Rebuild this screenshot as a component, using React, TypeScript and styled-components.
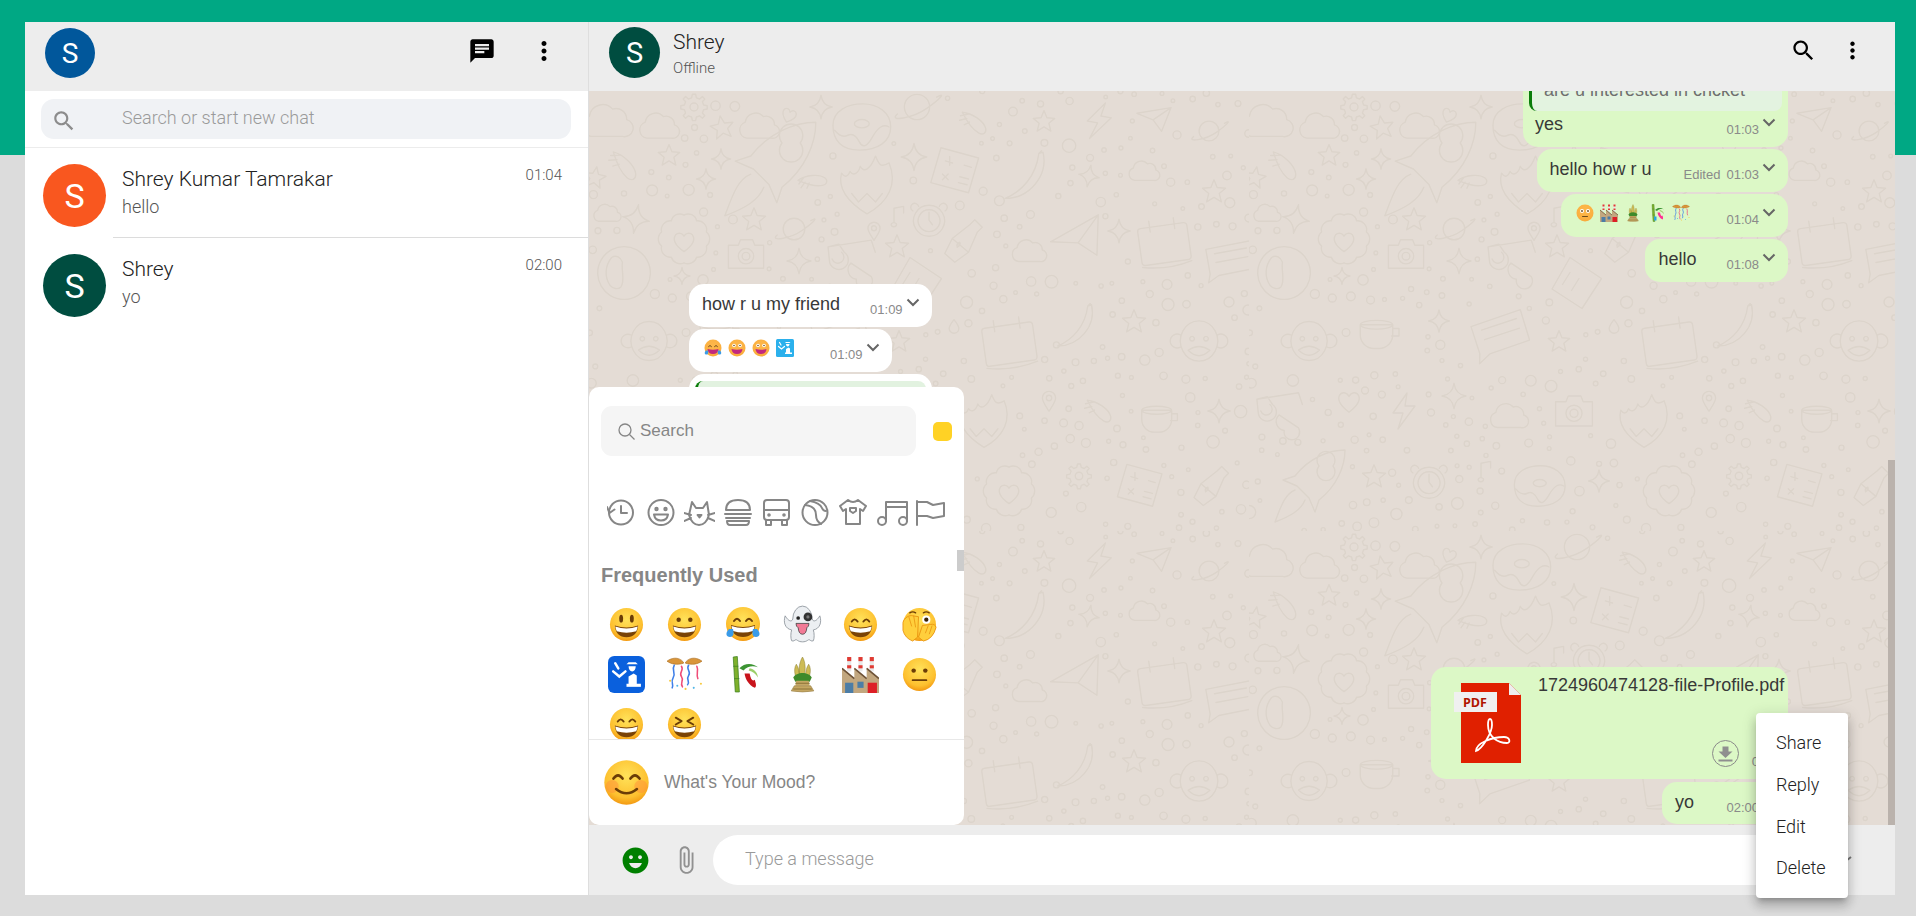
import React from 'react'
import styled, { createGlobalStyle } from 'styled-components'

const Global = createGlobalStyle`
  html, body { margin: 0; height: 100%; }
  body {
    background: linear-gradient(#00a884 155px, #dcdcdc 155px);
    font-family: Roboto, "Liberation Sans", sans-serif;
    overflow: hidden;
  }
`

const ICONS = {
  chat: 'M20 2H4c-1.1 0-1.99.9-1.99 2L2 22l4-4h14c1.1 0 2-.9 2-2V4c0-1.1-.9-2-2-2zM6 9h12v2H6V9zm8 5H6v-2h8v2zm4-6H6V6h12v2z',
  dots: 'M12 8c1.1 0 2-.9 2-2s-.9-2-2-2-2 .9-2 2 .9 2 2 2zm0 2c-1.1 0-2 .9-2 2s.9 2 2 2 2-.9 2-2-.9-2-2-2zm0 6c-1.1 0-2 .9-2 2s.9 2 2 2 2-.9 2-2-.9-2-2-2z',
  search: 'M15.5 14h-.79l-.28-.27C15.41 12.59 16 11.11 16 9.5 16 5.91 13.09 3 9.5 3S3 5.91 3 9.5 5.91 16 9.5 16c1.61 0 3.09-.59 4.23-1.57l.27.28v.79l5 4.99L20.49 19l-4.99-5zm-6 0C7.01 14 5 11.99 5 9.5S7.01 5 9.5 5 14 7.01 14 9.5 11.99 14 9.5 14z',
  emoji: 'M11.99 2C6.47 2 2 6.48 2 12s4.47 10 9.99 10C17.52 22 22 17.52 22 12S17.52 2 11.99 2zM8.5 8C9.33 8 10 8.67 10 9.5S9.33 11 8.5 11 7 10.33 7 9.5 7.67 8 8.5 8zM12 18c-2.28 0-4.22-1.66-5-4h10c-.78 2.34-2.72 4-5 4zm3.5-7c-.83 0-1.5-.67-1.5-1.5S14.67 8 15.5 8s1.5.67 1.5 1.5-.67 1.5-1.5 1.5z',
  clip: 'M16.5 6v11.5c0 2.21-1.79 4-4 4s-4-1.79-4-4V5c0-1.38 1.12-2.5 2.5-2.5s2.5 1.12 2.5 2.5v10.5c0 .55-.45 1-1 1s-1-.45-1-1V6H10v9.5c0 1.38 1.12 2.5 2.5 2.5s2.5-1.12 2.5-2.5V5c0-2.21-1.79-4-4-4S7 2.79 7 5v12.5c0 3.04 2.46 5.5 5.5 5.5s5.5-2.46 5.5-5.5V6h-1.5z'
}

const Icon = ({ d, size, color = '#000' }: { d: string, size: number, color?: string }) => (
  <svg width={size} height={size} viewBox='0 0 24 24' fill={color} style={{ display: 'block', flexShrink: 0 }}>
    <path d={d} />
  </svg>
)

/* wallpaper doodles, each drawn in an 80x80 box */
const DOODLES: Record<string, string> = {
  star5: 'M40 8 L49 30 L73 32 L55 47 L61 71 L40 58 L19 71 L25 47 L7 32 L31 30Z',
  star4: 'M40 6 Q44 36 72 40 Q44 44 40 74 Q36 44 8 40 Q36 36 40 6Z',
  cloud: 'M18 62a15 15 0 0 1-3-29a19 19 0 0 1 33-10a15 15 0 0 1 20 15a12 12 0 0 1-6 24Z',
  bolt: 'M46 4 L18 44 H38 L28 76 L62 30 H42Z',
  plane: 'M4 28 L76 16 L56 66 L38 42Z M38 42 L76 16',
  planet: 'M22 40a18 18 0 1 0 36 0a18 18 0 1 0-36 0 M12 50C-2 62 34 56 54 42S82 18 68 26',
  calendar: 'M12 20h56a4 4 0 0 1 4 4v40a4 4 0 0 1-4 4H12a4 4 0 0 1-4-4V24a4 4 0 0 1 4-4Z M24 12v14 M56 12v14 M8 70q32 8 64 0',
  banana: 'M60 6C68 40 40 72 6 72C30 62 50 40 54 8Z M54 8l4-4',
  chat: 'M8 24L70 12L76 50L26 60L12 70L14 58Z M20 30L64 22 M22 42L66 34',
  monkey: 'M40 14a24 26 0 1 0 0.1 0Z M16 32a9 9 0 1 0 0 16 M64 32a9 9 0 1 1 0 16 M31 34a3 3 0 1 0 .1 0Z M49 34a3 3 0 1 0 .1 0Z M26 52q14-10 28 0q-14 14-28 0Z',
  cup: 'M10 30H62V46A22 22 0 0 1 40 68H32A22 22 0 0 1 10 46Z M10 30A26 7 0 0 1 62 30A26 7 0 0 1 10 30 M62 36H72V48H60',
  heart: 'M40 70C14 50 10 36 14 26C20 14 34 16 40 28C46 16 60 14 66 26C70 36 66 50 40 70Z',
  pin: 'M40 74C26 52 18 42 18 30A22 22 0 0 1 62 30C62 42 54 52 40 74Z M31 30a9 9 0 1 0 18 0a9 9 0 1 0-18 0',
  glasses: 'M6 22L22 18L30 30A14 14 0 1 1 8 42Z M40 46L70 66A12 12 0 1 1 48 70A14 14 0 0 1 40 46Z M12 40a9 9 0 1 0 14-10 M6 22L70 12L76 30',
  camera: 'M8 24H26L30 14H52L56 24H72V66H8Z M26 44a14 14 0 1 0 28 0a14 14 0 1 0-28 0 M33 44a7 7 0 1 0 14 0a7 7 0 1 0-14 0',
  note: 'M30 62V14L62 8V30 M30 62a9 7 0 1 1-1 0Z',
  rocket: 'M76 4C60 4 40 12 26 30L14 34L28 40L40 52L46 66L50 54C68 40 76 20 76 4Z M50 20a9 9 0 1 0 14 0a9 9 0 1 0-14 0 M26 44C16 48 12 60 6 76C22 70 32 64 36 54',
  donut: 'M6 38C6 20 24 12 42 12S76 22 76 40S60 68 38 68S6 56 6 38Z M32 36a9 5 0 1 0 18 0a9 5 0 1 0-18 0 M8 44q8 10 16 6t14 8t16-6t20-12',
  flame: 'M40 74C14 58 6 42 10 26C14 32 18 30 20 24C24 30 30 26 32 18C36 26 44 22 50 6C54 16 56 20 66 14C76 38 66 60 40 74Z M22 50l8 10l10-10l10 10l8-10',
  clock: 'M40 16a27 27 0 1 0 .1 0Z M40 24a19 19 0 1 0 .1 0Z M40 28V42L46 50 M22 18a7 7 0 1 0-10 8 M58 18a7 7 0 1 1 10 8',
  bottle: 'M62 6L74 18L66 26L52 58L30 74L14 60L26 36L54 14Z M26 36L52 58 M34 50q6-4 4-8q-6 2-4 8Z',
  comet: 'M14 16C36 18 62 36 66 52C68 62 60 68 50 62C36 54 24 36 14 16Z M10 24l18-4 M8 34l16-4 M18 44l12-6',
  cloudHeart: 'M40 6a12 12 0 0 1 18 8a13 13 0 0 1 14 16a13 13 0 0 1 0 20a13 13 0 0 1-14 16a13 13 0 0 1-18 8a13 13 0 0 1-18-8a13 13 0 0 1-14-16a13 13 0 0 1 0-20a13 13 0 0 1 14-16a12 12 0 0 1 18-8Z M40 58C26 48 24 40 28 34C32 30 38 32 40 36C42 32 48 30 52 34C56 40 54 48 40 58Z',
  gear: 'M36 8h8l2 9l8 3l7-6l6 6l-6 7l3 8l9 2v8l-9 2l-3 8l6 7l-6 6l-7-6l-8 3l-2 9h-8l-2-9l-8-3l-7 6l-6-6l6-7l-3-8l-9-2v-8l9-2l3-8l-6-7l6-6l7 6l8-3Z M30 40a10 10 0 1 0 20 0a10 10 0 1 0-20 0',
  ball: 'M40 6a34 34 0 1 0 .1 0Z M24 20C16 30 14 44 22 56C26 60 32 62 36 58C42 50 36 36 38 26C36 20 30 16 24 20Z',
  drop: 'M40 8C40 8 64 38 64 52A24 24 0 0 1 16 52C16 38 40 8 40 8Z',
  calc: 'M22 8L74 22L60 70L8 56Z M28 26l10 3 M34 20v12 M54 32l10 3 M24 44l8 8 M32 44l-8 8 M48 48l12 3 M46 56l12 3',
  case: 'M28 6L70 34L44 74L4 48Z M28 26L18 42 M40 34L30 50'
}

const PLACED: [string, number, number, number, number][] = [
  ['cloud', 18, 30, 56, 0], ['cloud', 70, 35, 44, 0], ['gear', 105, 16, 32, 0], ['star5', 133, 36, 28, -10], ['cloud', 170, 35, 44, 0],
  ['heart', 200, 24, 20, 20], ['star4', 232, 16, 28, 0], ['donut', 272, 36, 66, 0], ['planet', 328, 16, 56, 0], ['comet', 385, 32, 36, 0],
  ['comet', 35, 75, 40, 10], ['star5', 80, 64, 26, 0], ['star4', 132, 68, 24, 0], ['rocket', 180, 78, 104, 0], ['comet', 224, 90, 34, -40],
  ['flame', 278, 94, 68, 0], ['star4', 325, 66, 32, 0], ['calc', 365, 80, 58, 0], ['star5', 6, 86, 26, 10], ['star4', 117, 88, 24, 0],
  ['cloud', 18, 122, 30, 0], ['star4', 47, 128, 34, 10], ['pin', 285, 140, 22, 0], ['note', 308, 125, 24, 0], ['clock', 340, 128, 46, 0],
  ['bottle', 372, 150, 50, 0], ['cloudHeart', 95, 148, 56, 0], ['star5', 165, 128, 28, 0], ['planet', 205, 138, 48, 0], ['camera', 157, 163, 44, 0],
  ['star4', 210, 170, 30, 0], ['glasses', 262, 168, 54, 0], ['star5', 308, 155, 28, 0], ['ball', 35, 182, 62, 0], ['star4', 93, 185, 20, 0],
  ['case', 330, 192, 60, 0],
  ['star5', 455, 30, 26, 0], ['bolt', 510, 30, 42, 10], ['plane', 565, 28, 38, 0], ['banana', 440, 85, 56, 0], ['star4', 500, 85, 26, 10],
  ['cloud', 555, 80, 34, 0], ['planet', 620, 40, 44, 0], ['star5', 625, 100, 28, 0], ['cloud', 440, 160, 38, 0], ['plane', 490, 150, 60, -20],
  ['calendar', 575, 150, 62, -8], ['chat', 640, 170, 58, 0], ['star4', 530, 140, 28, 0],
  ['monkey', 60, 250, 60, 0], ['cup', 130, 240, 50, 0], ['star4', 190, 230, 26, 0], ['chat', 250, 245, 66, -8], ['star5', 310, 250, 26, 0],
  ['drop', 365, 235, 16, 0], ['calendar', 420, 250, 64, -8], ['banana', 490, 235, 50, 0], ['star5', 545, 230, 28, 0], ['monkey', 610, 250, 62, 0],
  ['glasses', 30, 320, 52, 0], ['heart', 100, 310, 30, 0], ['bolt', 155, 320, 40, 0], ['star4', 205, 305, 30, 0], ['cloud', 260, 325, 42, 0],
  ['camera', 325, 320, 46, 0], ['flame', 395, 330, 62, 0], ['pin', 460, 310, 24, 0], ['comet', 510, 320, 36, 0], ['cup', 570, 325, 46, 0],
  ['star4', 630, 320, 28, 0], ['rocket', 60, 395, 80, 0], ['star5', 125, 385, 28, 0], ['clock', 180, 390, 46, 0], ['note', 235, 380, 24, 0],
  ['donut', 290, 395, 58, 0], ['star4', 350, 390, 26, 0], ['cloudHeart', 420, 400, 56, 0], ['gear', 490, 385, 30, 0], ['calc', 550, 395, 54, 0],
  ['bottle', 620, 395, 46, 0]
]

let seed = 23
const rand = () => {
  seed = (seed * 16807) % 2147483647
  return seed / 2147483647
}
const TILE_W = 660
const TILE_H = 440
const specks: { x: number, y: number, r: number }[] = []
for (let i = 0; i < 2600 && specks.length < 330; i++) {
  const x = rand() * TILE_W
  const y = rand() * TILE_H
  const r = 1.8 + rand() * rand() * 5
  const hitsMotif = PLACED.some(m => Math.hypot(m[1] - x, m[2] - y) < m[3] * 0.52 + r)
  const hitsSpeck = specks.some(s => Math.hypot(s.x - x, s.y - y) < s.r + r + 7)
  if (!hitsMotif && !hitsSpeck) specks.push({ x, y, r })
}

const Wallpaper = () => (
  <S.Wallpaper width='100%' height='100%'>
    <defs>
      <pattern id='doodle' width={TILE_W} height={TILE_H} patternUnits='userSpaceOnUse'>
        <g fill='none' stroke='#dcd4cb' strokeWidth='1.4' strokeLinejoin='round' strokeLinecap='round'>
          {PLACED.map((m, i) => (
            <path
              key={i}
              d={DOODLES[m[0]]}
              vectorEffect='non-scaling-stroke'
              transform={`translate(${m[1] - m[3] / 2} ${m[2] - m[3] / 2}) scale(${m[3] / 80}) rotate(${m[4]} 40 40)`}
            />
          ))}
          {specks.map((c, i) => <circle key={i} cx={c.x} cy={c.y} r={c.r} />)}
        </g>
      </pattern>
    </defs>
    <rect width='100%' height='100%' fill='url(#doodle)' />
  </S.Wallpaper>
)

/* emoji, drawn since no colour emoji font is available */
type FaceKind = 'smiley' | 'grin' | 'joy' | 'beam' | 'neutral' | 'squint' | 'smile' | 'peek' | 'stare'

const Face = ({ kind, size, flat }: { kind: FaceKind, size: number, flat?: boolean }) => {
  const id = `f${flat ? 'flat' : 'shade'}`
  const ink = flat ? '#6b4a1a' : '#6b3d07'
  const arch = <path d='M9 15q3-4.5 6 0M21 15q3-4.5 6 0' fill='none' stroke={ink} strokeWidth='2' strokeLinecap='round' />
  const mouth = flat
    ? <path d='M7 20q11 3 22 0q-1 10-11 10t-11-10Z' fill='#c2297e' />
    : <>
        <path d='M6 19q12 4 24 0q-1 12-12 12t-12-12Z' fill='#7a4306' />
        <path d='M6.500 20q11.500 4 23 0q-.5 3-1.500 5q-10 3-20 0q-1-2-1.500-5Z' fill='#fff' />
      </>
  return (
    <svg width={size} height={size} viewBox='0 0 36 36' style={{ display: 'block', flexShrink: 0 }}>
      <defs>
        <radialGradient id={id} cx='50%' cy='35%' r='65%'>
          <stop offset='0' stopColor={flat ? '#fdb84c' : '#ffe25a'} />
          <stop offset='0.75' stopColor={flat ? '#fbb040' : '#fdc02f'} />
          <stop offset='1' stopColor={flat ? '#f8a93a' : '#f39a12'} />
        </radialGradient>
      </defs>
      <circle cx='18' cy='18' r='17' fill={`url(#${id})`} />
      {kind === 'smiley' && <>
        <ellipse cx='12.500' cy='12' rx='2' ry='4' fill={ink} /><ellipse cx='23.500' cy='12' rx='2' ry='4' fill={ink} />{mouth}
      </>}
      {kind === 'grin' && <>
        {flat
          ? <><circle cx='12' cy='13' r='3.600' fill='#fff' /><circle cx='24' cy='13' r='3.600' fill='#fff' /><circle cx='12' cy='13' r='1.600' fill={ink} /><circle cx='24' cy='13' r='1.600' fill={ink} /></>
          : <><circle cx='12' cy='13' r='2.300' fill={ink} /><circle cx='24' cy='13' r='2.300' fill={ink} /></>}
        {mouth}
      </>}
      {kind === 'joy' && <>
        {arch}{mouth}
        <path d='M4 23c-4 4-3 8 1 8s4-4 3-8ZM32 23c4 4 3 8-1 8s-4-4-3-8Z' fill='#3a9be8' />
      </>}
      {kind === 'beam' && <>{arch}{mouth}</>}
      {kind === 'neutral' && <>
        <circle cx='12' cy='14' r='2.300' fill={ink} /><circle cx='24' cy='14' r='2.300' fill={ink} />
        <rect x='10' y='23' width='16' height='1.800' rx='.9' fill={ink} />
      </>}
      {kind === 'stare' && <>
        <circle cx='12' cy='14' r='4' fill='#fff' /><circle cx='24' cy='14' r='4' fill='#fff' />
        <circle cx='12' cy='14' r='1.800' fill={ink} /><circle cx='24' cy='14' r='1.800' fill={ink} />
        <rect x='12' y='24' width='12' height='2' rx='1' fill={ink} />
      </>}
      {kind === 'squint' && <>
        <path d='M9 11l6 3.500l-6 3.500M27 11l-6 3.500l6 3.500' fill='none' stroke={ink} strokeWidth='2' strokeLinecap='round' strokeLinejoin='round' />{mouth}
      </>}
      {kind === 'smile' && <>
        <circle cx='7' cy='21' r='5' fill='#ff8a3c' opacity='.45' /><circle cx='29' cy='21' r='5' fill='#ff8a3c' opacity='.45' />
        <path d='M8 15q3.500-5 7 0M21 15q3.500-5 7 0' fill='none' stroke={ink} strokeWidth='2' strokeLinecap='round' />
        <path d='M10 23q8 6.500 16 0' fill='none' stroke={ink} strokeWidth='2' strokeLinecap='round' />
      </>}
      {kind === 'peek' && <>
        <path d='M8 6q3-2 6 0M22 6q3-2 6 0' fill='none' stroke={ink} strokeWidth='1.400' strokeLinecap='round' />
        <circle cx='25' cy='13' r='4.200' fill='#fff' /><circle cx='25' cy='13' r='2.200' fill='#3a2208' />
        <path d='M1 16c1-5 7-8 10-7l6 1l-1 21l-5 4q-8-3-10-11ZM35 21c0-2-3-4-6-3l-8 1l-4 12l5 4q10-2 13-14Z' fill='#ffcf3c' stroke='#e8920e' strokeWidth='.9' />
        <path d='M7 10l3 10M12 9l2 12M27 19l-3 8M31 19l-3 9' stroke='#e8920e' strokeWidth='.8' />
      </>}
    </svg>
  )
}

const Ghost = ({ size }: { size: number }) => (
  <svg width={size} height={size} viewBox='0 0 36 36' style={{ display: 'block', flexShrink: 0 }}>
    <path d='M9 13a9 12 0 0 1 18 0c1 3 4 2 7-3c2 6 0 12-6 13c1 3 1 8 0 10c-2 1-3-1-4-1s-2 2-6 2s-5-2-6-2s-2 2-4 1c-1-2-1-7 0-10c-6-1-8-7-6-13c3 5 6 6 7 3Z' fill='#eceff2' stroke='#8f959c' strokeWidth='.8' />
    <circle cx='14' cy='12' r='1.700' fill='#222' />
    <circle cx='23' cy='11' r='4' fill='#333' /><circle cx='23' cy='11' r='1.500' fill='#777' />
    <path d='M12 17h12q0 3-2 4q-.5 6-4 6t-4-6q-2-1-2-4Z' fill='#f27a96' stroke='#3a3a3a' strokeWidth='.7' />
  </svg>
)

const Passport = ({ size, flat }: { size: number, flat?: boolean }) => (
  <svg width={size} height={size} viewBox='0 0 36 36' style={{ display: 'block', flexShrink: 0 }}>
    <rect x='0' y='0' width='36' height='36' rx={flat ? 3 : 6} fill={flat ? '#2bb0ec' : '#0a60dd'} />
    <g fill='#fff'>
      <path d='M20 6h7l2 2h-11ZM20 10h7c0 3-1.500 5-3.500 5s-3.500-2-3.500-5Z' />
      <path d='M20 28v-8l5-3l3 2v9Z' />
      <rect x='18' y='27' width='14' height='3' />
    </g>
    <path d='M7 7l3 5M5 15l6 5l6-5' fill='none' stroke='#fff' strokeWidth='2.400' strokeLinecap='round' />
  </svg>
)

const Confetti = ({ size }: { size: number }) => (
  <svg width={size} height={size} viewBox='0 0 36 36' style={{ display: 'block', flexShrink: 0 }}>
    <path d='M17 6C12 0 5 2 1 5c4 3 10 4 16 2ZM19 6c5-6 12-4 16-1c-4 3-10 4-16 2Z' fill='#d9953a' stroke='#a96a1c' strokeWidth='.6' />
    <g fill='none' strokeWidth='1.500' strokeLinecap='round'>
      <path d='M8 9c-3 5 2 7-1 12s1 6-1 10' stroke='#3f7fe8' />
      <path d='M15 10c3 4-3 6 0 10s-2 6 1 10' stroke='#ef4d78' />
      <path d='M22 9c-3 4 3 6 0 10s2 6-1 9' stroke='#3f7fe8' />
      <path d='M30 10c2 4-1 8 1 12' stroke='#ef4d78' />
    </g>
    <g fill='#f7c93c'><circle cx='4' cy='24' r='1' /><circle cx='19' cy='32' r='1' /><circle cx='34' cy='27' r='1' /></g>
    <g fill='#53b7e8'><circle cx='11' cy='29' r='1' /><circle cx='27' cy='31' r='1' /></g>
  </svg>
)

const Bamboo = ({ size, flat }: { size: number, flat?: boolean }) => (
  <svg width={size} height={size} viewBox='0 0 36 36' style={{ display: 'block', flexShrink: 0 }}>
    <g stroke='#3b7f1e' strokeWidth='.7'>
      <path d='M8 1l4-.5L14 35h-4Z' fill='#7fb02c' />
      <path d='M8 10h5M9 22h5' />
    </g>
    <path d='M14 12c5-6 14-5 18-1c-5-2-10-1-14 3Z' fill='#3c9433' />
    <path d='M24 12c5 1 8 5 8 9c-2-4-5-6-9-7Z' fill='#9ccf6a' />
    <path d='M19 17c1 6 4 11 10 14c2-2 1-4 0-8c-2 2-4 0-5-6Z' fill={flat ? '#ff2f92' : '#c8141c'} />
    {flat && <path d='M12 25h5v8h-5Z' fill='#29a9e0' />}
  </svg>
)

const Kadomatsu = ({ size }: { size: number }) => (
  <svg width={size} height={size} viewBox='0 0 36 36' style={{ display: 'block', flexShrink: 0 }}>
    <path d='M18 1c3 5 3 12 2 17h-5c-1-5 0-12 3-17ZM12 8c2 3 3 7 3 11h-4c-1-4-1-8 1-11ZM24 8c2 3 2 7 1 11h-4c0-4 1-8 3-11Z' fill='#cdbb55' stroke='#8a7c2b' strokeWidth='.5' />
    <path d='M9 21c3-6 15-6 18 0l-2 4H11Z' fill='#3e8a2a' />
    <path d='M12 24h12l1 5H11Z' fill='#c5a763' />
    <path d='M10 29h16l3 5q-11 2-22 0Z' fill='#c5a763' stroke='#8b7237' strokeWidth='.5' />
    <path d='M11 26.500h14M9 32h18' fill='none' stroke='#8b7237' strokeWidth='1' />
  </svg>
)

const Factory = ({ size }: { size: number }) => (
  <svg width={size} height={size} viewBox='0 0 36 36' style={{ display: 'block', flexShrink: 0 }}>
    <g fill='#e8e8e8'><rect x='5' y='1' width='4' height='14' /><rect x='16' y='1' width='4' height='14' /><rect x='27' y='1' width='4' height='14' /></g>
    <g fill='#e03a32'><rect x='5' y='1' width='4' height='4' /><rect x='16' y='1' width='4' height='4' /><rect x='27' y='1' width='4' height='4' /><rect x='5' y='9' width='4' height='3' /><rect x='16' y='9' width='4' height='3' /><rect x='27' y='9' width='4' height='3' /></g>
    <path d='M0 12l12 10V12l12 10V12l12 10v14H0Z' fill='#c2a77f' />
    <path d='M0 12l12 10M12 12l12 10M24 12l12 10' stroke='#6e5338' strokeWidth='1.600' />
    <rect x='3' y='26' width='8' height='10' fill='#4c7da6' />
    <rect x='15' y='25' width='6' height='6' fill='#4c7da6' />
    <rect x='25' y='26' width='9' height='10' fill='#dd1f26' />
  </svg>
)

const PdfIcon = () => (
  <S.PdfSvg width='67' height='80' viewBox='0 0 67 80'>
    <path d='M7 0H55L67 12V80H7Z' fill='#e02000' />
    <path d='M55 0L67 12H55Z' fill='#eee' />
    <rect x='0' y='9' width='43' height='20' fill='#f0f0f0' />
    <text x='9' y='24' fontFamily='"Open Sans", sans-serif' fontSize='12.500' fontWeight='700' fill='#b01500'>PDF</text>
    <path d='M22 68C28 66 38 50 38 42C38 34 34 34 34 42C34 54 44 60 53 60C57 60 56 54 50 54C38 54 22 60 22 68Z' fill='none' stroke='#fff' strokeWidth='1.800' />
  </S.PdfSvg>
)

const Download = () => (
  <svg width='27' height='27' viewBox='0 0 27 27' style={{ display: 'block', flexShrink: 0 }}>
    <circle cx='13.500' cy='13.500' r='13' fill='none' stroke='#8a8a8a' strokeWidth='1' />
    <path d='M10.500 6.500h6V11.500h4L13.500 18L6.500 11.500h4Z' fill='#8f8f8f' />
    <rect x='6.500' y='19.500' width='14' height='2' fill='#8f8f8f' />
  </svg>
)

const Chevron = () => (
  <S.Chevron width='14' height='9' viewBox='0 0 14 9'>
    <path d='M1.500 1.500L7 7L12.500 1.500' fill='none' stroke='#666' strokeWidth='2' />
  </S.Chevron>
)

const CATEGORY_ICONS = [
  <><circle cx='14' cy='13.500' r='12' /><path d='M14 7v7h6M0 8l2.500 6l5-3.500' /></>,
  <><circle cx='15' cy='13.500' r='12.500' /><circle cx='10.500' cy='10' r='1.200' /><circle cx='19.500' cy='10' r='1.200' /><path d='M8 15.500h14q-1 6-7 6t-7-6Z' /></>,
  <><path d='M8 3l4 6h7l4-6l2 13q-3 10-10 10t-10-10ZM0 14l7 2M0 22l7-3M31 14l-7 2M31 22l-7-3' /><path d='M13.500 16h4l-2 2.500Z' /></>,
  <><path d='M3 11q0-10 12-10t12 10ZM2 15h26M3 19h24M4 22q0 4 3 4h16q3 0 3-4Z' /></>,
  <><rect x='3' y='1' width='25' height='20' rx='3' /><path d='M3 11h25M5 21v5h5v-5M21 21v5h5v-5' /><circle cx='8' cy='16' r='.8' /><circle cx='23' cy='16' r='.8' /></>,
  <><circle cx='15' cy='13.500' r='12.500' /><path d='M5 6q11 1 11 10q0 6 5 9M10 2q10 2 12 7q1 3 4 3' /></>,
  <><path d='M10 1L2 7l3 5l3-2v15h14V10l3 2l3-5l-8-6q-5 4-10 0ZM12 9h6v3l-3 2l-3-2Z' /></>,
  <><path d='M9 22V3h21v19M9 8h21' /><circle cx='5' cy='22' r='4' /><circle cx='26' cy='22' r='4' /></>,
  <><path d='M2 26V2M2 3h10l6 3l11-2v13l-11 2l-6-2H2' /></>
]

const FREQUENT = [
  <Face kind='smiley' size={35} />, <Face kind='grin' size={35} />, <Face kind='joy' size={36} />,
  <Ghost size={39} />, <Face kind='beam' size={35} />, <Face kind='peek' size={35} />,
  <Passport size={37} />, <Confetti size={37} />, <Bamboo size={37} />,
  <Kadomatsu size={37} />, <Factory size={37} />, <Face kind='neutral' size={35} />,
  <Face kind='beam' size={35} />, <Face kind='squint' size={35} />
]

const Meta = ({ time, edited }: { time: string, edited?: boolean }) => (
  <>
    {edited && <S.Edited>Edited</S.Edited>}
    <S.Time $tight={edited}>{time}</S.Time>
    <Chevron />
  </>
)

export default function App() {
  return (
    <>
      <Global />
      <S.Page>
        <S.Sidebar>
          <S.SideHeader>
            <S.Avatar $size={50} $bg='#01579b' $font={28}>S</S.Avatar>
            <S.HeaderIcons $gap={33}>
              <Icon d={ICONS.chat} size={28} />
              <Icon d={ICONS.dots} size={30} />
            </S.HeaderIcons>
          </S.SideHeader>
          <S.SearchWrap>
            <S.SearchBox>
              <S.SearchIcon><Icon d={ICONS.search} size={26} color='#8c8c8c' /></S.SearchIcon>
              <S.SearchText>Search or start new chat</S.SearchText>
            </S.SearchBox>
          </S.SearchWrap>
          <S.ChatRow $line>
            <S.Avatar $size={63} $bg='#f9571f' $font={34}>S</S.Avatar>
            <S.ChatInfo>
              <S.ChatName>Shrey Kumar Tamrakar</S.ChatName>
              <S.ChatMsg>hello</S.ChatMsg>
            </S.ChatInfo>
            <S.ChatTime>01:04</S.ChatTime>
          </S.ChatRow>
          <S.ChatRow>
            <S.Avatar $size={63} $bg='#004d40' $font={34}>S</S.Avatar>
            <S.ChatInfo>
              <S.ChatName>Shrey</S.ChatName>
              <S.ChatMsg>yo</S.ChatMsg>
            </S.ChatInfo>
            <S.ChatTime>02:00</S.ChatTime>
          </S.ChatRow>
        </S.Sidebar>

        <S.Chat>
          <S.ChatHeader>
            <S.Avatar $size={51} $bg='#004d40' $font={29}>S</S.Avatar>
            <S.Peer>
              <S.PeerName>Shrey</S.PeerName>
              <S.PeerStatus>Offline</S.PeerStatus>
            </S.Peer>
            <S.HeaderIcons $gap={22}>
              <Icon d={ICONS.search} size={27} />
              <Icon d={ICONS.dots} size={27} />
            </S.HeaderIcons>
          </S.ChatHeader>

          <S.Body>
            <Wallpaper />
            <S.Messages>
              <S.Bubble $mine $column>
                <S.Quote $mine>
                  <S.QuoteText>are u interested in cricket</S.QuoteText>
                </S.Quote>
                <S.BubbleRow $short>
                  <S.Text>yes</S.Text>
                  <S.Push />
                  <Meta time='01:03' />
                </S.BubbleRow>
              </S.Bubble>
              <S.Bubble $mine>
                <S.BubbleRow>
                  <S.Text>hello how r u</S.Text>
                  <Meta time='01:03' edited />
                </S.BubbleRow>
              </S.Bubble>
              <S.Bubble $mine>
                <S.BubbleRow $emoji>
                  <S.EmojiLine>
                    <Face kind='stare' size={18} flat />
                    <Factory size={18} />
                    <Kadomatsu size={18} />
                    <Bamboo size={18} flat />
                    <Confetti size={18} />
                  </S.EmojiLine>
                  <Meta time='01:04' />
                </S.BubbleRow>
              </S.Bubble>
              <S.Bubble $mine>
                <S.BubbleRow>
                  <S.Text>hello</S.Text>
                  <Meta time='01:08' />
                </S.BubbleRow>
              </S.Bubble>
              <S.Bubble>
                <S.BubbleRow>
                  <S.Text>how r u my friend</S.Text>
                  <Meta time='01:09' />
                </S.BubbleRow>
              </S.Bubble>
              <S.Bubble>
                <S.BubbleRow $emoji>
                  <S.EmojiLine>
                    <Face kind='joy' size={18} flat />
                    <Face kind='grin' size={18} flat />
                    <Face kind='grin' size={18} flat />
                    <Passport size={18} flat />
                  </S.EmojiLine>
                  <Meta time='01:09' />
                </S.BubbleRow>
              </S.Bubble>
              <S.Bubble $column $tall>
                <S.Quote $tall />
              </S.Bubble>
              <S.FileBubble>
                <PdfIcon />
                <S.FileInfo>
                  <S.Text>1724960474128-file-Profile.pdf</S.Text>
                  <S.FileFoot>
                    <Download />
                    <S.FileTime>01:59</S.FileTime>
                  </S.FileFoot>
                </S.FileInfo>
              </S.FileBubble>
              <S.Bubble $mine $last>
                <S.BubbleRow $last>
                  <S.Text>yo</S.Text>
                  <S.Push />
                  <Meta time='02:00' />
                </S.BubbleRow>
              </S.Bubble>
            </S.Messages>
            <S.ScrollThumb />

            <S.EmojiPanel>
              <S.PickerSearchRow>
                <S.PickerSearch>
                  <svg width='17' height='17' viewBox='0 0 17 17' fill='none' stroke='#868686' strokeWidth='1.300'>
                    <circle cx='7' cy='7' r='6' /><path d='M11.500 11.500L16.500 16.500' />
                  </svg>
                  <span>Search</span>
                </S.PickerSearch>
                <S.Swatch />
              </S.PickerSearchRow>
              <S.Categories>
                {CATEGORY_ICONS.map((g, i) => (
                  <S.CategoryIcon key={i} width='31' height='27' viewBox='0 0 31 27'>{g}</S.CategoryIcon>
                ))}
              </S.Categories>
              <S.PickerTitle>Frequently Used</S.PickerTitle>
              <S.EmojiGrid>
                {FREQUENT.map((e, i) => <S.EmojiCell key={i}>{e}</S.EmojiCell>)}
              </S.EmojiGrid>
              <S.PickerFoot>
                <Face kind='smile' size={47} />
                <S.Mood>What's Your Mood?</S.Mood>
              </S.PickerFoot>
              <S.PickerThumb />
            </S.EmojiPanel>
          </S.Body>

          <S.InputBar>
            <S.BarIcon $w={31}><Icon d={ICONS.emoji} size={31} color='#008000' /></S.BarIcon>
            <S.BarIcon $w={30} $ml={20}><Icon d={ICONS.clip} size={30} color='#919191' /></S.BarIcon>
            <S.Input>Type a message</S.Input>
            <S.BarIcon $w={22} $ml={20}>
              <svg width='22' height='10' viewBox='0 0 22 10' style={{ display: 'block' }}>
                <path d='M2 2L11 9L20 2' fill='none' stroke='#777' strokeWidth='2' />
              </svg>
            </S.BarIcon>
          </S.InputBar>

          <S.Menu>
            <S.MenuItem>Share</S.MenuItem>
            <S.MenuItem>Reply</S.MenuItem>
            <S.MenuItem>Edit</S.MenuItem>
            <S.MenuItem>Delete</S.MenuItem>
          </S.Menu>
        </S.Chat>
      </S.Page>
    </>
  )
}

const S = {
  Page: styled.div`
    display: flex;
    box-sizing: border-box;
    height: 916px;
    padding: 22px 21px 21px 25px;
  `,
  Sidebar: styled.div`
    width: 563px;
    flex-shrink: 0;
    background: #fff;
    border-right: 1px solid #dedede;
  `,
  SideHeader: styled.div`
    display: flex;
    justify-content: space-between;
    box-sizing: border-box;
    height: 69px;
    padding: 6px 29px 0 20px;
    background: #ededed;
  `,
  HeaderIcons: styled.div<{ $gap: number }>`
    display: flex;
    align-items: center;
    gap: ${p => p.$gap}px;
    height: 46px;
    margin-left: auto;
  `,
  Avatar: styled.div<{ $size: number, $bg: string, $font: number }>`
    width: ${p => p.$size}px;
    height: ${p => p.$size}px;
    flex-shrink: 0;
    border-radius: 50%;
    background: ${p => p.$bg};
    color: #fff;
    font-size: ${p => p.$font}px;
    display: flex;
    align-items: center;
    justify-content: center;
  `,
  SearchWrap: styled.div`
    box-sizing: border-box;
    height: 57px;
    padding: 8px 17px 0 16px;
    border-bottom: 1px solid #ececec;
  `,
  SearchBox: styled.div`
    position: relative;
    height: 40px;
    border-radius: 13px;
    background: #f0f2f5;
    padding-left: 81px;
  `,
  SearchIcon: styled.div`
    position: absolute;
    left: 10px;
    top: 9px;
  `,
  SearchText: styled.div`
    line-height: 38px;
    font-size: 18px;
    font-weight: 300;
    color: #9a9a9a;
  `,
  ChatRow: styled.div<{ $line?: boolean }>`
    position: relative;
    display: flex;
    box-sizing: border-box;
    height: 90px;
    padding: 16px 26px 0 18px;
    ${p => p.$line && `
      &::after {
        content: '';
        position: absolute;
        left: 88px;
        right: 0;
        bottom: 0;
        height: 1px;
        background: #dcdcdc;
      }
    `}
  `,
  ChatInfo: styled.div`
    margin-left: 16px;
    flex: 1;
  `,
  ChatName: styled.div`
    font-size: 21px;
    line-height: 30px;
    font-weight: 300;
    color: #222;
  `,
  ChatMsg: styled.div`
    font-size: 18px;
    line-height: 26px;
    font-weight: 300;
    color: #555;
  `,
  ChatTime: styled.div`
    font-size: 15px;
    line-height: 22px;
    font-weight: 300;
    color: #555;
  `,
  Chat: styled.div`
    position: relative;
    flex: 1;
    min-width: 0;
    display: flex;
    flex-direction: column;
  `,
  ChatHeader: styled.div`
    display: flex;
    box-sizing: border-box;
    height: 69px;
    flex-shrink: 0;
    padding: 5px 29px 0 20px;
    background: #ededed;
  `,
  Peer: styled.div`
    margin-left: 13px;
  `,
  PeerName: styled.div`
    font-size: 21px;
    line-height: 26px;
    margin-top: 2px;
    font-weight: 300;
    color: #222;
  `,
  PeerStatus: styled.div`
    font-size: 15px;
    line-height: 20px;
    margin-top: 3px;
    font-weight: 300;
    color: #555;
  `,
  Body: styled.div`
    position: relative;
    flex: 1;
    min-height: 0;
    background: #e4dcd5;
  `,
  Wallpaper: styled.svg`
    position: absolute;
    inset: 0;
    display: block;
  `,
  Messages: styled.div`
    position: relative;
    height: 100%;
    box-sizing: border-box;
    overflow: hidden;
    display: flex;
    flex-direction: column;
    justify-content: flex-end;
    gap: 2px;
    padding: 0 107px 1px 100px;
    font-family: "Liberation Sans", Arial, sans-serif;
  `,
  ScrollThumb: styled.div`
    position: absolute;
    right: 0;
    top: 369px;
    bottom: 0;
    width: 7px;
    background: #bab2ac;
  `,
  Bubble: styled.div<{ $mine?: boolean, $column?: boolean, $tall?: boolean, $last?: boolean }>`
    flex-shrink: 0;
    display: flex;
    flex-direction: ${p => p.$column ? 'column' : 'row'};
    align-self: ${p => p.$mine ? 'flex-end' : 'flex-start'};
    border-radius: 15px;
    background: ${p => p.$mine ? '#dcf8c6' : '#fff'};
    ${p => p.$column && 'width: 265px;'}
    ${p => p.$tall && 'width: 243px; height: 291px; padding-top: 7px; box-sizing: border-box;'}
    ${p => p.$last && 'width: 126px; margin-top: 1px;'}
  `,
  Quote: styled.div<{ $mine?: boolean, $tall?: boolean }>`
    margin: 0 6px;
    border-left: 3px solid #0a7d0a;
    border-radius: 8px;
    background: ${p => p.$mine ? '#e3f3e0' : '#e2f2e0'};
    padding: 40px 8px 10px 12px;
    ${p => p.$tall && 'height: 120px;'}
  `,
  QuoteText: styled.div`
    font-size: 18px;
    line-height: 22px;
    color: #6f6f6f;
    white-space: nowrap;
  `,
  BubbleRow: styled.div<{ $short?: boolean, $emoji?: boolean, $last?: boolean }>`
    flex: ${p => p.$short ? 'none' : 1};
    display: flex;
    align-items: flex-start;
    height: ${p => p.$short ? 36 : p.$last ? 42 : 43}px;
    box-sizing: border-box;
    padding: ${p => p.$short ? '2px 12px 0 12px' : p.$emoji ? '9px 12px 0 15px' : '9px 12px 0 13px'};
  `,
  Text: styled.div`
    font-size: 18px;
    line-height: 22px;
    color: #383838;
    white-space: nowrap;
  `,
  Push: styled.div`
    flex: 1;
  `,
  EmojiLine: styled.div`
    display: flex;
    gap: 6px;
    margin-top: 1px;
    margin-right: 6px;
  `,
  Edited: styled.div`
    margin: 10px 0 0 32px;
    font-size: 13px;
    line-height: 14px;
    color: #8a8a8a;
  `,
  Time: styled.div<{ $tight?: boolean }>`
    margin: 10px 0 0 ${p => p.$tight ? 6 : 30}px;
    font-size: 13px;
    line-height: 14px;
    color: #8a8a8a;
  `,
  Chevron: styled.svg`
    display: block;
    flex-shrink: 0;
    margin: 5px 0 0 3px;
  `,
  FileBubble: styled.div`
    flex-shrink: 0;
    align-self: flex-end;
    display: flex;
    box-sizing: border-box;
    width: 357px;
    height: 112px;
    padding: 7px 6px 0 23px;
    border-radius: 15px;
    background: #dcf8c6;
  `,
  PdfSvg: styled.svg`
    display: block;
    flex-shrink: 0;
    margin-top: 9px;
  `,
  FileInfo: styled.div`
    flex: 1;
    margin-left: 17px;
    display: flex;
    flex-direction: column;
  `,
  FileFoot: styled.div`
    display: flex;
    justify-content: flex-end;
    margin-top: 44px;
  `,
  FileTime: styled.div`
    margin: 15px 0 0 13px;
    font-size: 13px;
    line-height: 14px;
    color: #8a8a8a;
  `,
  EmojiPanel: styled.div`
    position: absolute;
    left: 0;
    bottom: 0;
    width: 375px;
    height: 438px;
    display: flex;
    flex-direction: column;
    background: #fff;
    border-radius: 10px;
    font-family: "Liberation Sans", Arial, sans-serif;
  `,
  PickerSearchRow: styled.div`
    display: flex;
    align-items: center;
    padding: 19px 0 0 12px;
  `,
  PickerSearch: styled.div`
    width: 315px;
    height: 50px;
    box-sizing: border-box;
    display: flex;
    align-items: center;
    gap: 5px;
    padding-left: 17px;
    border-radius: 11px;
    background: #f5f5f5;
    font-size: 17px;
    color: #868686;
  `,
  Swatch: styled.div`
    width: 19px;
    height: 19px;
    margin-left: 17px;
    border-radius: 5px;
    background: #ffd225;
  `,
  Categories: styled.div`
    display: flex;
    gap: 7.500px;
    margin-top: 43px;
    padding-left: 18px;
  `,
  CategoryIcon: styled.svg`
    display: block;
    flex-shrink: 0;
    fill: none;
    stroke: #868686;
    stroke-width: 2;
    stroke-linejoin: round;
    stroke-linecap: round;
  `,
  PickerTitle: styled.div`
    margin: 37px 0 0 12px;
    font-size: 20px;
    line-height: 24px;
    font-weight: 700;
    color: #868686;
  `,
  EmojiGrid: styled.div`
    flex: 1;
    min-height: 0;
    overflow: hidden;
    display: grid;
    grid-template-columns: repeat(6, 58.600px);
    grid-auto-rows: 50px;
    align-content: start;
    padding: 12px 0 0 8px;
  `,
  EmojiCell: styled.div`
    display: flex;
    align-items: center;
    justify-content: center;
  `,
  PickerFoot: styled.div`
    display: flex;
    align-items: center;
    flex-shrink: 0;
    height: 86px;
    border-top: 1px solid #e8e8e8;
    padding: 0 0 1px 14px;
    box-sizing: border-box;
  `,
  Mood: styled.div`
    margin-left: 14px;
    font-size: 17.500px;
    color: #868686;
  `,
  PickerThumb: styled.div`
    position: absolute;
    right: 0;
    top: 163px;
    width: 7px;
    height: 21px;
    background: #ccc;
  `,
  InputBar: styled.div`
    display: flex;
    align-items: center;
    box-sizing: border-box;
    height: 70px;
    flex-shrink: 0;
    padding: 0 42px 0 31px;
    background: #ededed;
  `,
  BarIcon: styled.div<{ $w: number, $ml?: number }>`
    width: ${p => p.$w}px;
    margin-left: ${p => p.$ml || 0}px;
    flex-shrink: 0;
  `,
  Input: styled.div`
    flex: 1;
    height: 50px;
    margin-left: 12px;
    padding-left: 32px;
    border-radius: 25px;
    background: #fff;
    line-height: 48px;
    font-size: 18px;
    font-weight: 300;
    color: #9a9a9a;
  `,
  Menu: styled.div`
    position: absolute;
    right: 47px;
    bottom: -3px;
    width: 92px;
    box-sizing: border-box;
    padding: 9px 0 9px 20px;
    border-radius: 4px;
    background: #fff;
    box-shadow: 0 5px 5px -3px rgba(0,0,0,.2), 0 8px 10px 1px rgba(0,0,0,.14), 0 3px 14px 2px rgba(0,0,0,.12);
  `,
  MenuItem: styled.div`
    height: 41.750px;
    line-height: 41.750px;
    font-size: 18px;
    font-weight: 300;
    color: #222;
  `
}
